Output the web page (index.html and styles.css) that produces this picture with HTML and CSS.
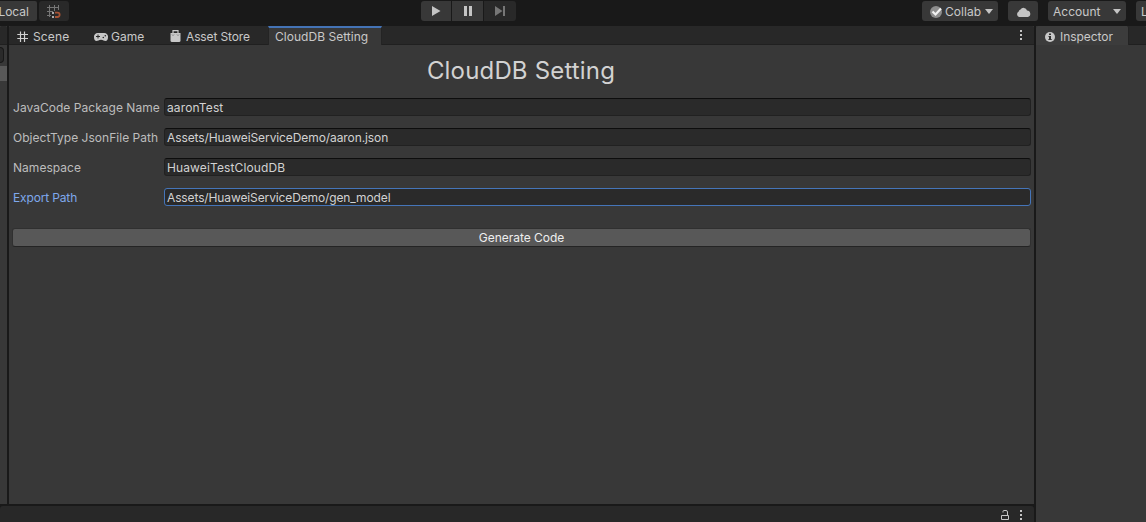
FILE: index.html
```
<!DOCTYPE html>
<html lang="en">
<head>
<meta charset="utf-8">
<title>CloudDB Setting</title>
<link rel="stylesheet" href="styles.css">
</head>
<body>
<header class="toolbar">
  <div class="group tools">
    <button class="tool local"><span class="label">Local</span></button>
    <button class="tool snap dim"><svg width="16" height="16" viewBox="0 0 16 16" fill="none"><path d="M3.500 1v12M8.500 1v6M12.500 1v5M1 3.500h12M1 7.500h6M1 11.500h4" stroke="#777" stroke-width="1"/><path d="M9 8.700h2.500a2.100 2.100 0 0 1 0 4.300H9" stroke="#a65335" stroke-width="1.800"/><path d="M6 8h2v2H6zM6 12h2v2H6z" fill="#aaa"/></svg></button>
  </div>
  <div class="group play">
    <button class="tool"><svg width="10" height="10" viewBox="0 0 10 10" fill="#c4c4c4"><path d="M1 0l8.500 5L1 10z"/></svg></button>
    <button class="tool"><svg width="10" height="10" viewBox="0 0 10 10" fill="#c4c4c4"><path d="M1 0h3v10H1zM6 0h3v10H6z"/></svg></button>
    <button class="tool dim"><svg width="10" height="10" viewBox="0 0 10 10" fill="#777"><path d="M0 0l7.500 5L0 10zM8 0h2v10H8z"/></svg></button>
  </div>
  <div class="group services">
    <button class="tool collab"><svg width="12" height="12" viewBox="0 0 12 12"><circle cx="6" cy="6" r="6" fill="#8d8d8d"/><path d="M2.500 5.500l3 3L11 2.500" fill="none" stroke="#f2f2f2" stroke-width="2.200"/></svg><span class="label">Collab</span><i class="caret"></i></button>
    <button class="tool cloud"><svg width="15" height="10" viewBox="0 0 15 10" fill="#c4c4c4"><path d="M3 10a3 3 0 0 1-.3-5.500A2.300 2.300 0 0 1 4.500 2.500 3.600 3.600 0 0 1 11 3.500a3.300 3.300 0 0 1 .8 6.500z"/></svg></button>
    <button class="tool account"><span class="label">Account</span><i class="caret"></i></button>
    <button class="tool layers"><span class="label">L</span></button>
  </div>
</header>
<div class="workspace">
  <div class="left">
    <div class="upper">
      <aside class="hierarchy"><div class="tabs"></div><div class="search"></div><div class="row"></div></aside>
      <main class="window">
        <nav class="tabs">
          <div class="tab scene"><svg width="12" height="12" viewBox="0 0 12 12" fill="none" stroke="#d0d0d0" stroke-width="1.200"><path d="M3.500 .5v10.500M7.500 .5v10.500M.3 3.500h10.700M.3 7.500h10.700"/></svg><span class="label">Scene</span></div>
          <div class="tab game"><svg width="14" height="8" viewBox="0 0 14 8"><path d="M3.700 0h6.600a3.700 3.700 0 0 1 3.700 4C14 6.500 13 8 11.500 8 10 8 9.200 6.700 7 6.700S4 8 2.500 8 0 6.500 0 4A3.700 3.700 0 0 1 3.700 0z" fill="#c8c8c8"/><path d="M2 3.500h4M4 1.500v4" stroke="#282828" stroke-width="1"/><circle cx="9.300" cy="4.500" r=".8" fill="#282828"/><circle cx="11.300" cy="2.800" r=".8" fill="#282828"/></svg><span class="label">Game</span></div>
          <div class="tab store"><svg width="11" height="12" viewBox="0 0 11 12"><path d="M.5 3h10v7.500q0 1.500-1.500 1.500H2Q.5 12 .5 10.500z" fill="#c8c8c8"/><path d="M3 3.500V.6h5v2.900" fill="none" stroke="#c8c8c8" stroke-width="1.200"/><path d="M2 4.500l1 1 1-1M7 4.500l1 1 1-1" fill="none" stroke="#666" stroke-width=".8"/></svg><span class="label">Asset Store</span></div>
          <div class="tab active"><span class="label">CloudDB Setting</span></div>
          <i class="kebab"></i>
        </nav>
        <h1 class="title">CloudDB Setting</h1>
        <form class="form">
          <div class="field"><label><span class="label">JavaCode Package Name</span></label><div class="input"><span class="label name-value">aaronTest</span></div></div>
          <div class="field"><label><span class="label">ObjectType JsonFile Path</span></label><div class="input"><span class="label path-value">Assets/HuaweiServiceDemo/aaron.json</span></div></div>
          <div class="field"><label><span class="label">Namespace</span></label><div class="input"><span class="label name-value">HuaweiTestCloudDB</span></div></div>
          <div class="field focused"><label><span class="label">Export Path</span></label><div class="input"><span class="label path-value">Assets/HuaweiServiceDemo/gen_model</span></div></div>
          <button type="button" class="generate"><span class="label">Generate Code</span></button>
        </form>
      </main>
    </div>
    <footer class="console"><svg width="10" height="10" viewBox="0 0 10 10" fill="none" stroke="#c4c4c4"><path d="M1.500 5.500h7v4h-7zM3 2.500V1.500q0-1 1-1h2q1.500 0 1.500 1.500v3.500" stroke-width="1"/></svg><i class="kebab"></i></footer>
  </div>
  <aside class="inspector">
    <nav class="tabs"><div class="tab info"><svg width="10" height="10" viewBox="0 0 10 10"><circle cx="5" cy="5" r="5" fill="#c8c8c8"/><path d="M4 1.500h2v1.500H4zM3.500 4H6v3h.7v1H3.400V7H4V5h-.5z" fill="#303030"/></svg><span class="label">Inspector</span></div></nav>
  </aside>
</div>
</body>
</html>
```
FILE: styles.css
```
* { box-sizing: border-box; }
body {
  margin: 0;
  width: 1146px;
  height: 522px;
  overflow: hidden;
  display: flex;
  flex-direction: column;
  background: #191919;
  color: #c8c8c8;
  font: 12px/16px Inter, "Liberation Sans", sans-serif;
  letter-spacing: 0.03px;
}
svg { display: block; flex: none; }
.label { white-space: nowrap; }
button { font: inherit; letter-spacing: inherit; color: inherit; border: 0; padding: 0; }

/* Toolbar */
.toolbar { height: 26px; flex: none; display: flex; padding-top: 1px; }
.group { display: flex; flex: none; height: 20px; }
.tool { display: flex; align-items: center; justify-content: center; height: 20px; width: 30px; background: #383838; padding-top: 1px; }
.tool.dim { background: #292929; }
.tools { width: 421px; gap: 2px; }
.tools .local { width: 37px; border-radius: 0 2px 2px 0; justify-content: flex-end; padding-right: 8px; letter-spacing: 0; }
.tools .snap { border-radius: 3px; }
.play { width: 501px; gap: 1px; }
.play .tool { padding-top: 0; }
.play .tool:first-child { border-radius: 3px 0 0 3px; }
.play .tool:nth-child(2) { width: 31px; }
.play .tool:last-child { border-radius: 0 3px 3px 0; width: 32px; }
.services { width: 224px; }
.services .tool { border-radius: 3px; flex: none; }
.services .collab { width: 76px; margin-right: 10px; padding-left: 8px; justify-content: flex-start; gap: 3px; }
.collab .caret { margin-left: 1px; }
.services .cloud { margin-right: 10px; }
.services .account { width: 78px; margin-right: 10px; justify-content: space-between; padding: 1px 5px 0; }
.services .layers { width: 10px; justify-content: flex-start; padding-left: 5px; border-radius: 3px 0 0 3px; overflow: hidden; }
.caret { margin-top: -1px; border: 4px solid transparent; border-top: 5px solid #c4c4c4; border-bottom: 0; }

/* Docked panels */
.workspace { flex: 1; display: flex; gap: 2px; min-height: 0; }
.left { width: 1034px; display: flex; flex-direction: column; gap: 2px; }
.upper { height: 478px; display: flex; gap: 2px; }
.hierarchy { width: 7px; background: #383838; overflow: hidden; }
.search { width: 4px; height: 16px; margin: 2px 0 3px; background: #2a2a2a; border: 1px solid #181818; border-left: 0; border-radius: 0 4px 4px 0; }
.row { height: 15px; background: #585858; }
.window { width: 1025px; background: #383838; }
.inspector { width: 110px; background: #383838; }
.tabs { height: 19px; display: flex; background: #282828; border-bottom: 1px solid #202020; border-radius: 2px 2px 0 0; }
.tab { height: 19px; display: flex; align-items: center; padding-top: 3px; }
.scene { width: 77px; padding-left: 8px; gap: 4px; }
.game { width: 76px; padding-left: 8px; gap: 3px; }
.scene .label { letter-spacing: 0.15px; }
.store { width: 106px; padding-left: 8px; gap: 5px; letter-spacing: -0.12px; }
.store svg { margin-top: -2px; }
.scene svg { margin-top: -1px; }
.active { width: 114px; padding: 0 0 0 6px; background: #383838; border: 1px solid #242424; border-top: 2px solid #4473b5; border-bottom: 0; }
.info { width: 93px; padding-left: 9px; gap: 5px; background: #3c3c3c; border-right: 1px solid #242424; border-radius: 2px 2px 0 0; letter-spacing: -0.05px; }
.info svg { margin-top: -1px; }
.kebab { width: 2px; height: 2px; background: #c4c4c4; box-shadow: 0 4px #c4c4c4, 0 8px #c4c4c4; }
.window .kebab { margin: 4px 12px 0 auto; }
.title { margin: 8px 1px 0 0; height: 36px; font-size: 24px; line-height: 36px; font-weight: 400; text-align: center; letter-spacing: 0.17px; color: #d2d2d2; }

/* Form */
.form { padding: 9px 3px 0; }
.field { display: flex; height: 18px; margin-bottom: 12px; }
.field label { width: 152px; flex: none; padding: 2px 0 0 1px; color: #bdbdbd; }
.input { flex: 1; height: 18px; padding: 1px 2px; background: #2a2a2a; border: 1px solid #212121; border-top-color: #0d0d0d; border-radius: 3px; color: #d2d2d2; }
.name-value { letter-spacing: 0.12px; }
.path-value { letter-spacing: -0.09px; }
.focused .path-value { letter-spacing: -0.12px; }
.focused label { color: #7fa8ec; letter-spacing: -0.15px; }
.focused .input { border-color: #4575b9; }
.generate { display: block; width: 100%; height: 19px; margin-top: 22px; padding-top: 1px; background: #585858; border: 1px solid #303030; border-bottom-color: #242424; border-radius: 3px; color: #eee; letter-spacing: -0.03px; }
.console { height: 16px; display: flex; align-items: center; background: #282828; border-radius: 3px 3px 0 0; padding: 2px 12px 0 1000px; }
.console .kebab { margin: -8px 0 0 10px; }
```
